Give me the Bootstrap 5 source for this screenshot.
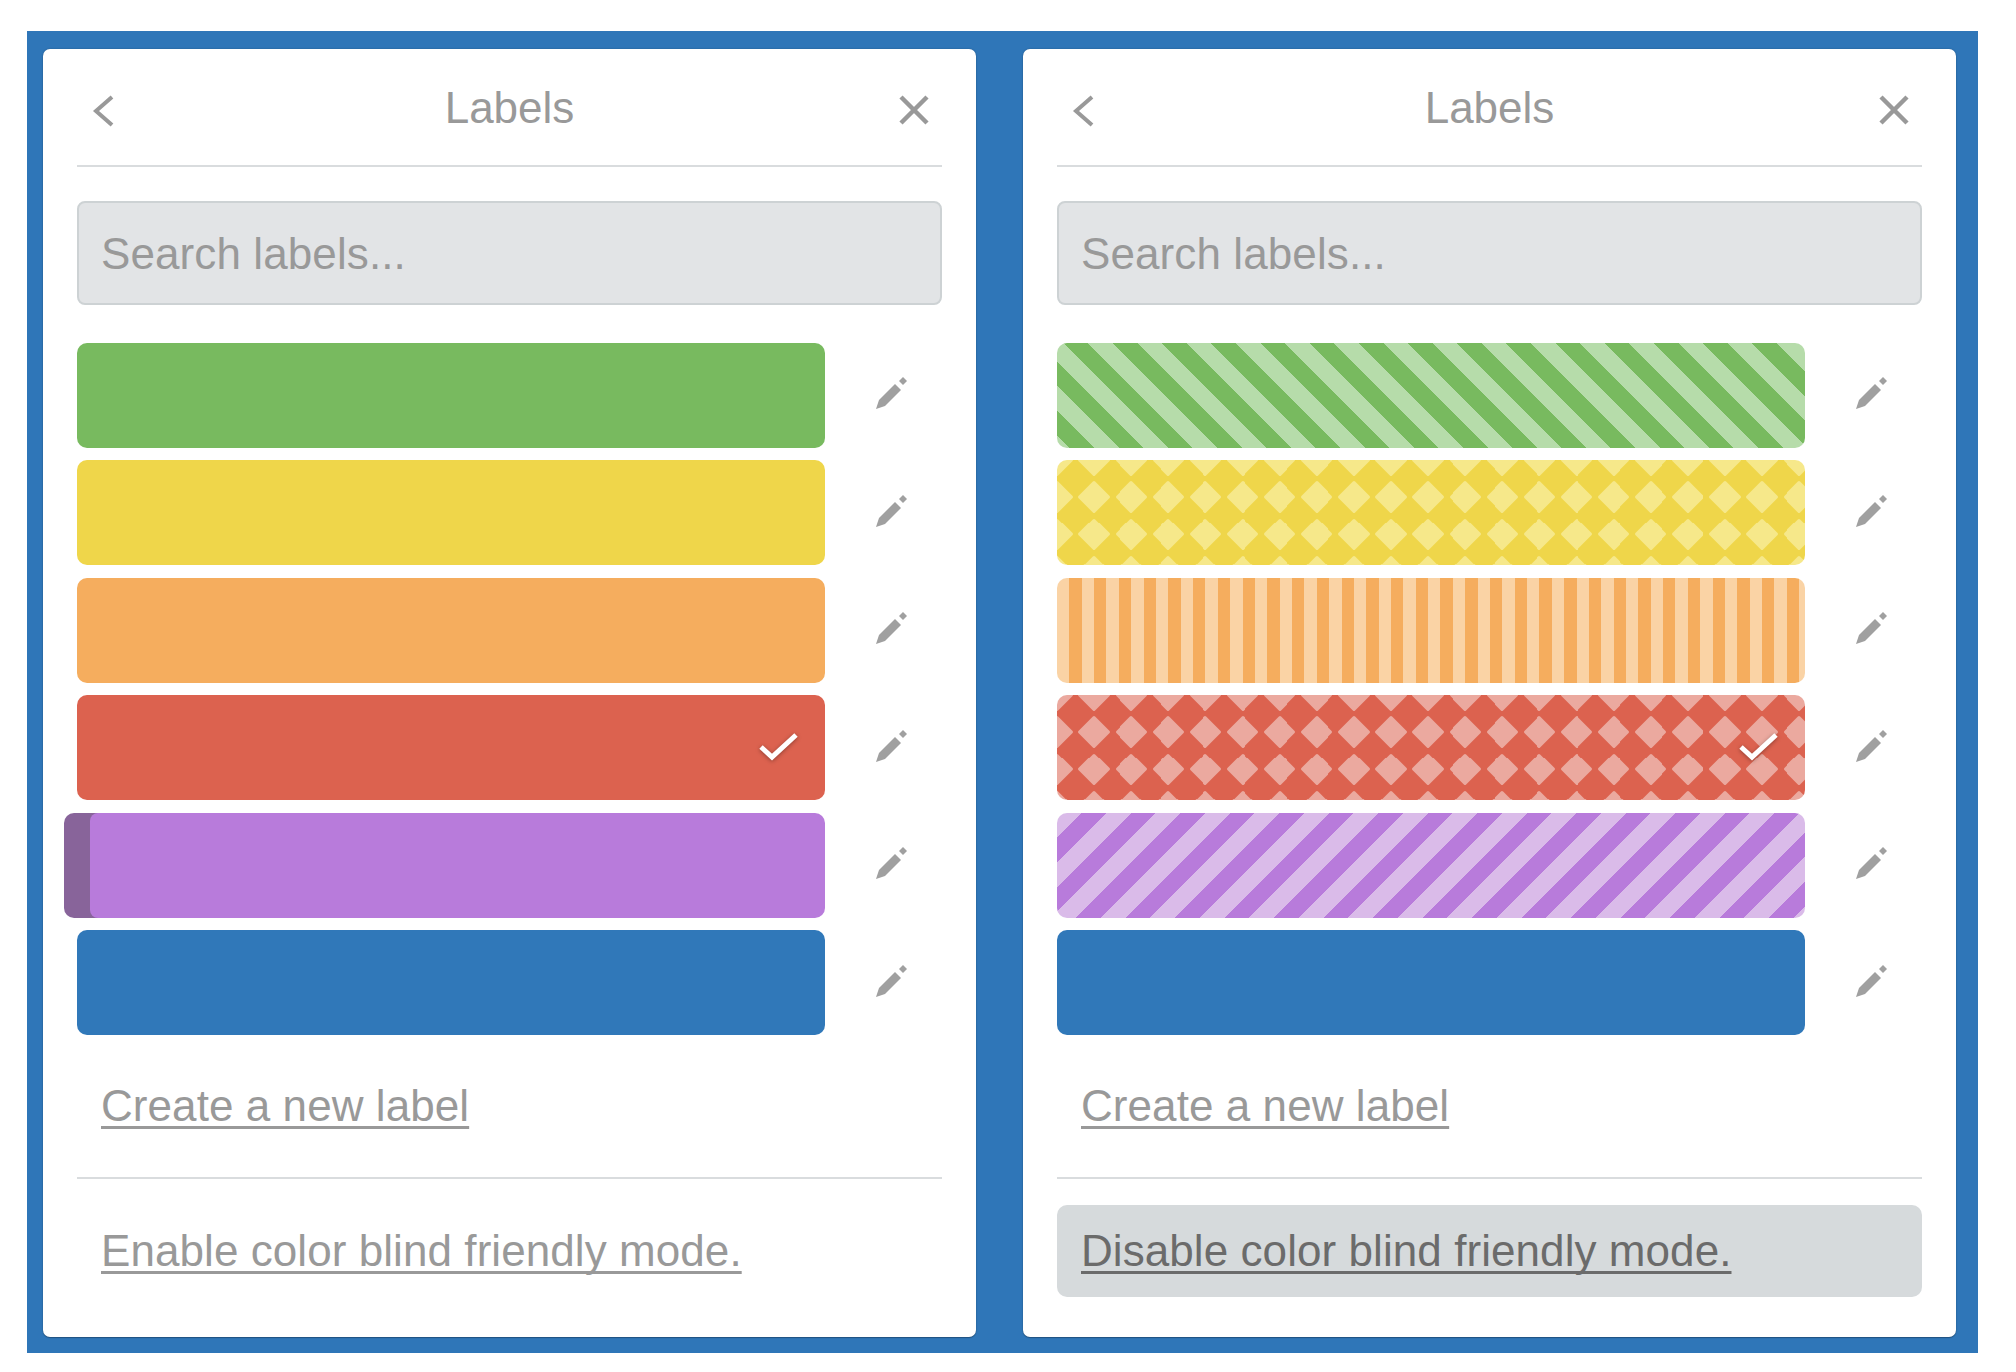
<!DOCTYPE html>
<html lang="en">
<head>
<meta charset="utf-8">
<title>Labels</title>
<link rel="stylesheet" href="https://cdn.jsdelivr.net/npm/bootstrap@5.3.0/dist/css/bootstrap.min.css">
<style>
body{background:#fff;font-family:"Liberation Sans",Arial,sans-serif;color:#999;font-size:44px;line-height:60px;}
.board{width:1951px;height:1322px;margin:31px 0 0 27px;padding:18px 22px 15px 16px;background:#2f76b8;gap:47px;}
.popover-pane{width:933px;height:1288px;padding:0 34px;border:0;border-radius:7px;box-shadow:0 0 2px rgba(0,0,0,.25),0 1px 1px rgba(0,0,0,.25);background:#fff;}
.pane-head{padding:29px 0 27px;border-bottom:2px solid #d9dcde;height:118px;}
.side-l{width:90px;padding-left:13px;padding-top:13px;}
.side-r{width:90px;padding-top:12px;display:flex;justify-content:flex-end;padding-right:8px;}
.pane-title{line-height:60px;color:#999;}
.search-box.form-control{height:104px;margin:34px 0 37.5px;padding:1px 22px 0;background:#e2e4e6;border:2px solid #cdd2d4;border-radius:8px;font-size:44px;color:#999;box-shadow:none;font-family:inherit;letter-spacing:.1px;}
.search-box.form-control::placeholder{color:#999;opacity:1;}
.label-row{height:105px;margin-bottom:12.5px;}
.swatch{width:748px;height:105px;border-radius:10px;position:relative;flex:none;}
.c-green{background-color:#78ba5f;}
.c-yellow{background-color:#efd64a;}
.c-orange{background-color:#f5ad5e;}
.c-red{background-color:#dc624f;}
.c-purple{background-color:#b87bdb;}
.c-blue{background-color:#3078b9;}
.p-green{background-image:repeating-linear-gradient(45deg,#b6dcaa 0,#b6dcaa 9.14px,#78ba5f 9.14px,#78ba5f 26.53px,#b6dcaa 26.53px,#b6dcaa 34.78px);}
.p-orange{background-image:repeating-linear-gradient(90deg,#fad3a5 0,#fad3a5 12.37px,#f5ad5e 12.37px,#f5ad5e 24.74px);}
.p-purple{background-image:repeating-linear-gradient(135deg,#dabbe9 0,#dabbe9 17.45px,#b87bdb 17.45px,#b87bdb 35px);}
.p-yellow{background-size:37.11px 37.11px;background-position:-18.555px -18.555px;background-image:url("data:image/svg+xml,%3Csvg xmlns='http://www.w3.org/2000/svg' width='37.11' height='37.11' viewBox='0 0 37.11 37.11'%3E%3Cpath d='M18.555 4.4L32.7 18.555L18.555 32.7L4.4 18.555Z' fill='%23f6e88a' stroke='%23f6e88a' stroke-width='3' stroke-linejoin='round'/%3E%3C/svg%3E");}
.p-red{background-size:37.11px 37.11px;background-position:-18.555px -18.555px;background-image:url("data:image/svg+xml,%3Csvg xmlns='http://www.w3.org/2000/svg' width='37.11' height='37.11' viewBox='0 0 37.11 37.11'%3E%3Cpath d='M18.555 4.4L32.7 18.555L18.555 32.7L4.4 18.555Z' fill='%23eba99f' stroke='%23eba99f' stroke-width='3' stroke-linejoin='round'/%3E%3C/svg%3E");}
.swatch-hover{width:761px;height:105px;margin-left:-13px;flex:none;border-radius:10px;background:linear-gradient(90deg,#88649a 40px,transparent 40px);padding-left:26px;}
.swatch-hover .swatch{width:735px;border-radius:8px 10px 10px 8px;}
.tick{position:absolute;right:26px;top:35px;filter:drop-shadow(0 1px 2px rgba(0,0,0,.35));}
.pen{margin:0 0 4px 50px;flex:none;}
.create-link{display:block;margin:28.5px 0 41px;padding-left:24px;line-height:60px;}
.soft-link{color:#999;text-decoration:underline;text-decoration-thickness:3px;text-underline-offset:5px;text-decoration-skip-ink:none;letter-spacing:.07px;}
.pane-rule{height:2px;background:#d9dcde;}
.mode-box{height:92px;margin-top:26px;padding-left:24px;line-height:92px;border-radius:10px;}
.mode-box.is-active{background:#d6dadc;}
.mode-box.is-active .soft-link{color:#6b6b6b;}
</style>
</head>
<body>
<div class="board d-flex">

  <div class="card popover-pane">
    <div class="pane-head d-flex align-items-start">
      <div class="side-l"><svg class="d-block" width="30" height="40" viewBox="0 0 30 40"><path d="M22 6L6 20L22 34" fill="none" stroke="#999" stroke-width="4"/></svg></div>
      <div class="pane-title flex-grow-1 text-center">Labels</div>
      <div class="side-r"><svg class="d-block" width="40" height="40" viewBox="0 0 40 40"><path d="M7 7L33 33M33 7L7 33" fill="none" stroke="#999" stroke-width="4.5"/></svg></div>
    </div>
    <input class="form-control search-box" type="text" placeholder="Search labels...">

    <div class="label-row d-flex align-items-center"><div class="swatch c-green"></div><svg class="pen" width="33" height="34" viewBox="0 0 33 34"><path d="M1 33L4 24L20 8L26 14L10 30Z" fill="#a0a0a0"/><path d="M24 5L28 1L32 5L28 9Z" fill="#a0a0a0"/></svg></div>
    <div class="label-row d-flex align-items-center"><div class="swatch c-yellow"></div><svg class="pen" width="33" height="34" viewBox="0 0 33 34"><path d="M1 33L4 24L20 8L26 14L10 30Z" fill="#a0a0a0"/><path d="M24 5L28 1L32 5L28 9Z" fill="#a0a0a0"/></svg></div>
    <div class="label-row d-flex align-items-center"><div class="swatch c-orange"></div><svg class="pen" width="33" height="34" viewBox="0 0 33 34"><path d="M1 33L4 24L20 8L26 14L10 30Z" fill="#a0a0a0"/><path d="M24 5L28 1L32 5L28 9Z" fill="#a0a0a0"/></svg></div>
    <div class="label-row d-flex align-items-center"><div class="swatch c-red"><svg class="tick" width="41" height="31" viewBox="0 0 41 31"><path d="M3 17L14 27L38 5" fill="none" stroke="#fff" stroke-width="5"/></svg></div><svg class="pen" width="33" height="34" viewBox="0 0 33 34"><path d="M1 33L4 24L20 8L26 14L10 30Z" fill="#a0a0a0"/><path d="M24 5L28 1L32 5L28 9Z" fill="#a0a0a0"/></svg></div>
    <div class="label-row d-flex align-items-center"><div class="swatch-hover"><div class="swatch c-purple"></div></div><svg class="pen" width="33" height="34" viewBox="0 0 33 34"><path d="M1 33L4 24L20 8L26 14L10 30Z" fill="#a0a0a0"/><path d="M24 5L28 1L32 5L28 9Z" fill="#a0a0a0"/></svg></div>
    <div class="label-row d-flex align-items-center"><div class="swatch c-blue"></div><svg class="pen" width="33" height="34" viewBox="0 0 33 34"><path d="M1 33L4 24L20 8L26 14L10 30Z" fill="#a0a0a0"/><path d="M24 5L28 1L32 5L28 9Z" fill="#a0a0a0"/></svg></div>

    <div class="create-link"><a class="soft-link" href="#">Create a new label</a></div>
    <div class="pane-rule"></div>
    <div class="mode-box"><a class="soft-link" href="#">Enable color blind friendly mode.</a></div>
  </div>

  <div class="card popover-pane">
    <div class="pane-head d-flex align-items-start">
      <div class="side-l"><svg class="d-block" width="30" height="40" viewBox="0 0 30 40"><path d="M22 6L6 20L22 34" fill="none" stroke="#999" stroke-width="4"/></svg></div>
      <div class="pane-title flex-grow-1 text-center">Labels</div>
      <div class="side-r"><svg class="d-block" width="40" height="40" viewBox="0 0 40 40"><path d="M7 7L33 33M33 7L7 33" fill="none" stroke="#999" stroke-width="4.5"/></svg></div>
    </div>
    <input class="form-control search-box" type="text" placeholder="Search labels...">

    <div class="label-row d-flex align-items-center"><div class="swatch c-green p-green"></div><svg class="pen" width="33" height="34" viewBox="0 0 33 34"><path d="M1 33L4 24L20 8L26 14L10 30Z" fill="#a0a0a0"/><path d="M24 5L28 1L32 5L28 9Z" fill="#a0a0a0"/></svg></div>
    <div class="label-row d-flex align-items-center"><div class="swatch c-yellow p-yellow"></div><svg class="pen" width="33" height="34" viewBox="0 0 33 34"><path d="M1 33L4 24L20 8L26 14L10 30Z" fill="#a0a0a0"/><path d="M24 5L28 1L32 5L28 9Z" fill="#a0a0a0"/></svg></div>
    <div class="label-row d-flex align-items-center"><div class="swatch c-orange p-orange"></div><svg class="pen" width="33" height="34" viewBox="0 0 33 34"><path d="M1 33L4 24L20 8L26 14L10 30Z" fill="#a0a0a0"/><path d="M24 5L28 1L32 5L28 9Z" fill="#a0a0a0"/></svg></div>
    <div class="label-row d-flex align-items-center"><div class="swatch c-red p-red"><svg class="tick" width="41" height="31" viewBox="0 0 41 31"><path d="M3 17L14 27L38 5" fill="none" stroke="#fff" stroke-width="5"/></svg></div><svg class="pen" width="33" height="34" viewBox="0 0 33 34"><path d="M1 33L4 24L20 8L26 14L10 30Z" fill="#a0a0a0"/><path d="M24 5L28 1L32 5L28 9Z" fill="#a0a0a0"/></svg></div>
    <div class="label-row d-flex align-items-center"><div class="swatch c-purple p-purple"></div><svg class="pen" width="33" height="34" viewBox="0 0 33 34"><path d="M1 33L4 24L20 8L26 14L10 30Z" fill="#a0a0a0"/><path d="M24 5L28 1L32 5L28 9Z" fill="#a0a0a0"/></svg></div>
    <div class="label-row d-flex align-items-center"><div class="swatch c-blue"></div><svg class="pen" width="33" height="34" viewBox="0 0 33 34"><path d="M1 33L4 24L20 8L26 14L10 30Z" fill="#a0a0a0"/><path d="M24 5L28 1L32 5L28 9Z" fill="#a0a0a0"/></svg></div>

    <div class="create-link"><a class="soft-link" href="#">Create a new label</a></div>
    <div class="pane-rule"></div>
    <div class="mode-box is-active"><a class="soft-link" href="#">Disable color blind friendly mode.</a></div>
  </div>

</div>
<script src="https://cdn.jsdelivr.net/npm/bootstrap@5.3.0/dist/js/bootstrap.bundle.min.js"></script>
</body>
</html>
